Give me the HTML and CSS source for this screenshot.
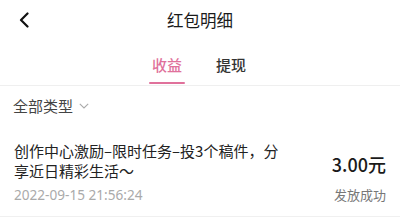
FILE: index.html
```html
<!DOCTYPE html>
<html lang="zh">
<head>
<meta charset="utf-8">
<link rel="stylesheet" href="styles.css">
</head>
<body>
<div class="page">
  <header class="topbar">
    <span class="back">
      <svg width="10" height="16" viewBox="0 0 10 16"><path d="M8.5 1.5 L2 8 L8.5 14.5" fill="none" stroke="#111" stroke-width="2.2" stroke-linecap="round" stroke-linejoin="round"/></svg>
    </span>
    <h1 class="title">红包明细</h1>
  </header>
  <nav class="tabs">
    <div class="tab active">收益</div>
    <div class="tab">提现</div>
  </nav>
  <div class="filter">
    <span>全部类型</span>
    <svg class="caret" width="10" height="6" viewBox="0 0 10 6"><path d="M0.8 0.8 L5 5 L9.2 0.8" fill="none" stroke="#aaa" stroke-width="1.1"/></svg>
  </div>
  <div class="item">
    <div class="item-main">
      <div class="item-title">创作中心激励–限时任务–投3个稿件，分享近日精彩生活～</div>
      <div class="item-date">2022-09-15 21:56:24</div>
    </div>
    <div class="item-side">
      <div class="amount">3.00元</div>
      <div class="status">发放成功</div>
    </div>
  </div>
</div>
</body>
</html>
```
FILE: styles.css
```css
* { box-sizing: border-box; }
html, body { margin: 0; padding: 0; background: #fff; }
body {
  font-family: "Noto Sans CJK SC", "Noto Sans", sans-serif;
  color: #222;
  width: 400px;
  height: 223px;
  overflow: hidden;
}
.topbar {
  height: 40px;
  display: flex;
  align-items: center;
  justify-content: center;
  position: relative;
}
.back {
  position: absolute;
  left: 19px;
  top: 12px;
  width: 10px;
  height: 16px;
  display: flex;
}
.title {
  margin: 0;
  font-size: 16.5px;
  font-weight: 400;
  color: #1a1a1a;
  line-height: 20px;
}
.tabs {
  height: 46px;
  display: flex;
  justify-content: center;
  gap: 34px;
  border-bottom: 1px solid #efefef;
  padding-right: 2px;
}
.tab {
  font-size: 15px;
  font-weight: 500;
  line-height: 20px;
  padding-top: 15px;
  color: #333;
  position: relative;
  width: 30px;
  text-align: center;
}
.tab.active { color: #e0719b; }
.tab.active::after {
  content: "";
  position: absolute;
  left: -3px;
  right: -3px;
  top: 42px;
  height: 2px;
  border-radius: 1px;
  background: #e0719b;
}
.filter {
  height: 38px;
  display: flex;
  align-items: center;
  padding-left: 13px;
  font-size: 15px;
  color: #444;
  gap: 6px;
}
.filter .caret { margin-top: 1px; }
.item {
  margin-top: 17px;
  padding: 0 14px 11px 14px;
  display: flex;
  align-items: flex-start;
  border-bottom: 1px solid #f0f0f0;
}
.item-main { flex: 1; }
.item-title {
  font-size: 15px;
  line-height: 20px;
  color: #222;
  width: 272px;
}
.item-date {
  margin-top: 4px;
  font-size: 13.6px;
  line-height: 20px;
  color: #aaa;
  font-family: "Noto Sans", sans-serif;
}
.item-side {
  display: flex;
  flex-direction: column;
  align-items: flex-end;
  padding-top: 11px;
}
.amount {
  font-size: 18px;
  line-height: 24px;
  font-weight: 500;
  color: #1a1a1a;
}
.status {
  margin-top: 9px;
  font-size: 13px;
  line-height: 20px;
  color: #777;
}
```
